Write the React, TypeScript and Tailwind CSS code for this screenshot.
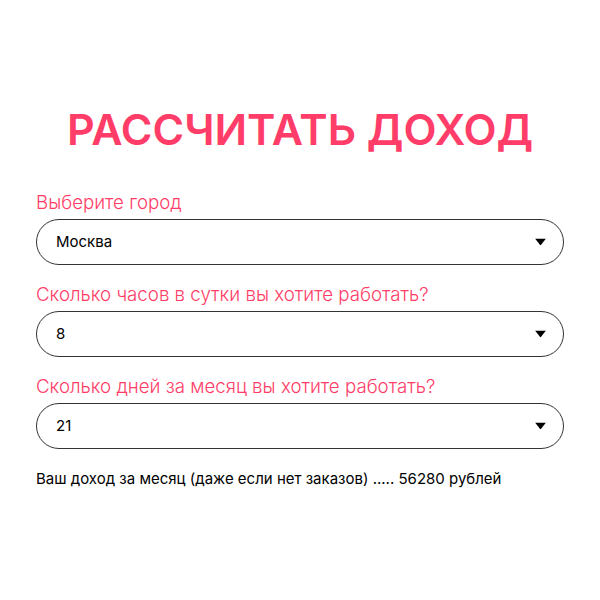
import { useState } from "react"

const cities = ["Москва", "Санкт-Петербург", "Казань"]
const hours = ["4", "6", "8", "10", "12"]
const days = ["15", "20", "21", "22", "26"]

// hourly rate per city, rubles
const rates: Record<string, number> = {
  "Москва": 335,
  "Санкт-Петербург": 300,
  "Казань": 250,
}

interface FieldProps {
  label: string
  value: string
  options: string[]
  onChange: (v: string) => void
}

function Field({ label, value, options, onChange }: FieldProps) {
  return (
    <div className="flex flex-col">
      <label className="text-[18.7px] leading-[22px] font-light text-[#ff3d68] mb-[5px]">
        {label}
      </label>
      <div className="relative">
        <select
          value={value}
          onChange={(e) => onChange(e.target.value)}
          className="appearance-none w-full h-[46px] rounded-full border border-[#333] bg-white pl-[19px] pr-10 text-[15px] text-black outline-none"
        >
          {options.map((o) => (
            <option key={o}>{o}</option>
          ))}
        </select>
        <svg
          className="pointer-events-none absolute right-[18px] top-1/2 -translate-y-1/2"
          width="11"
          height="7"
          viewBox="0 0 11 7"
        >
          <path d="M0 0h11L5.5 7z" fill="#000" />
        </svg>
      </div>
    </div>
  )
}

export default function App() {
  const [city, setCity] = useState("Москва")
  const [hour, setHour] = useState("8")
  const [day, setDay] = useState("21")

  const income = rates[city] * Number(hour) * Number(day)

  return (
    <div className="w-[600px] h-[600px] bg-white font-['Inter',sans-serif] px-[36px] pt-[103px]">
      <h1 className="text-center whitespace-nowrap text-[43px] leading-[52px] font-semibold text-[#ff3d68]">
        РАССЧИТАТЬ ДОХОД
      </h1>
      <div className="mt-[37px] flex flex-col gap-[19px]">
        <Field label="Выберите город" value={city} options={cities} onChange={setCity} />
        <Field
          label="Сколько часов в сутки вы хотите работать?"
          value={hour}
          options={hours}
          onChange={setHour}
        />
        <Field
          label="Сколько дней за месяц вы хотите работать?"
          value={day}
          options={days}
          onChange={setDay}
        />
      </div>
      <p className="mt-[19px] text-[15px] text-black">
        Ваш доход за месяц (даже если нет заказов) ..... {income} рублей
      </p>
    </div>
  )
}
